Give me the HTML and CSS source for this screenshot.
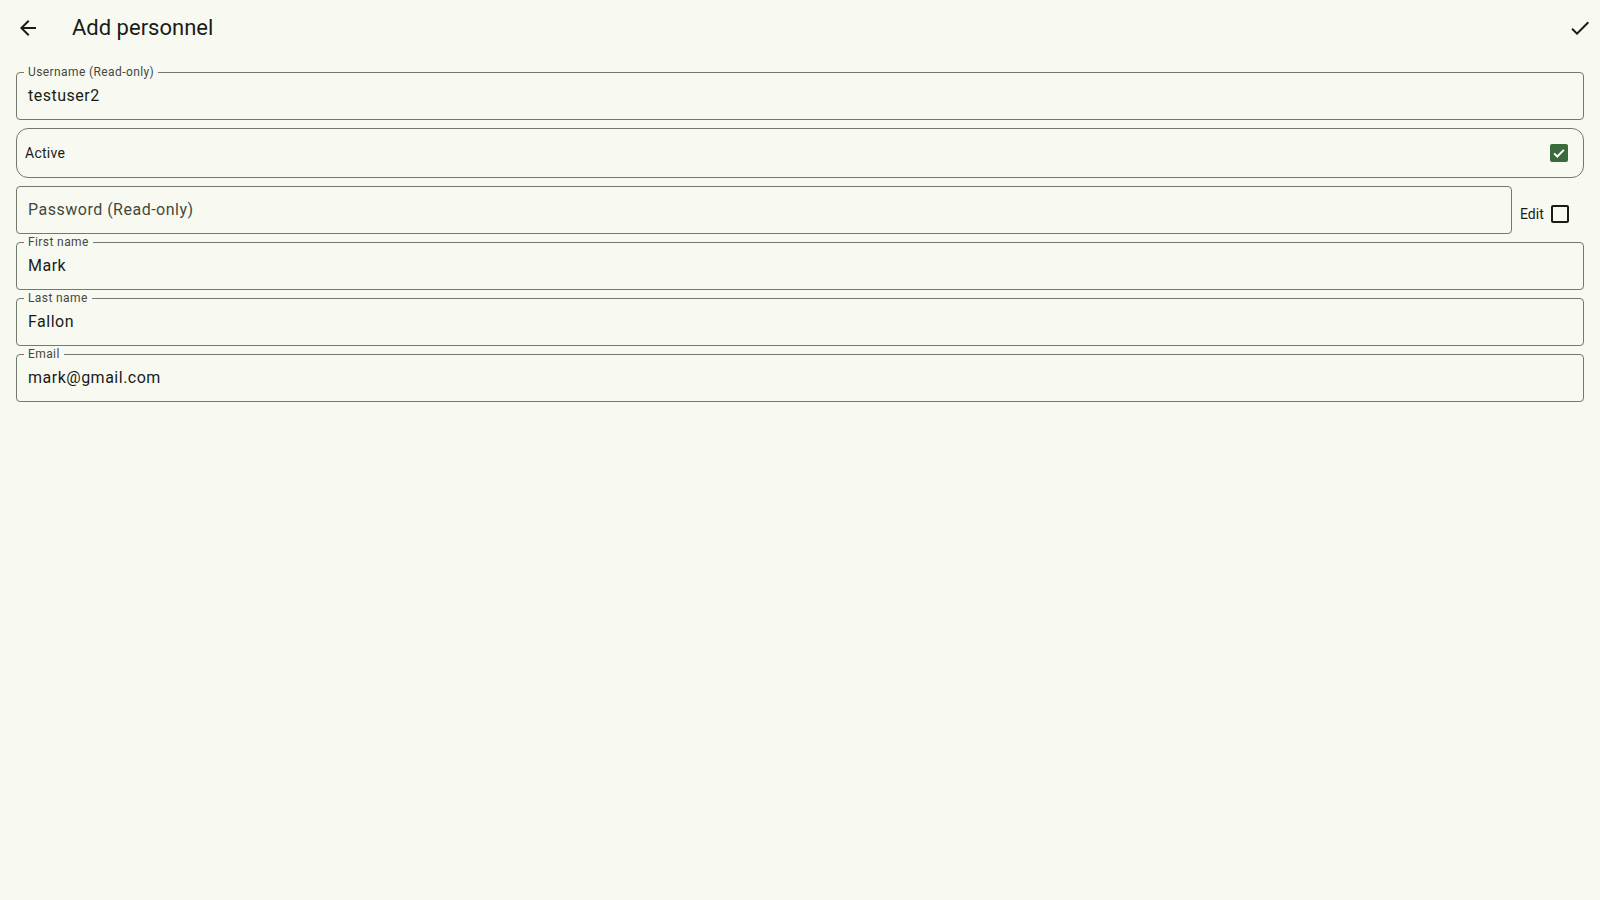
FILE: index.html
```html
<!DOCTYPE html>
<html lang="en">
<head>
<meta charset="utf-8">
<title>Add personnel</title>
<link rel="stylesheet" href="styles.css">
</head>
<body>
<header class="toolbar">
  <svg class="icon" viewBox="0 0 24 24" width="24" height="24"><path d="M20 11H7.83l5.59-5.59L12 4l-8 8 8 8 1.41-1.41L7.83 13H20v-2z"/></svg>
  <h1 class="title">Add personnel</h1>
  <svg class="icon icon-right" viewBox="0 0 24 24" width="24" height="24"><path d="M9 16.17L4.83 12l-1.42 1.41L9 19 21 7l-1.41-1.41z"/></svg>
</header>
<main class="form">
  <div class="field">
    <span class="label">Username (Read-only)</span>
    <span class="value">testuser2</span>
  </div>
  <div class="switch-row">
    <span class="switch-text">Active</span>
    <span class="checkbox checked">
      <svg viewBox="0 0 24 24" width="18" height="18"><path d="M5.5 12.5l4.2 4.2 8.8-8.8" fill="none" stroke="#fff" stroke-width="2.6"/></svg>
    </span>
  </div>
  <div class="password-row">
    <div class="field field-grow">
      <span class="placeholder">Password (Read-only)</span>
    </div>
    <div class="edit-group">
      <span class="edit-text">Edit</span>
      <span class="checkbox"></span>
    </div>
  </div>
  <div class="field">
    <span class="label">First name</span>
    <span class="value">Mark</span>
  </div>
  <div class="field">
    <span class="label">Last name</span>
    <span class="value">Fallon</span>
  </div>
  <div class="field">
    <span class="label">Email</span>
    <span class="value">mark@gmail.com</span>
  </div>
</main>
</body>
</html>
```
FILE: styles.css
```css
* { box-sizing: border-box; }
html, body {
  margin: 0;
  padding: 0;
  background: #f8faf2;
  font-family: Roboto, "Liberation Sans", sans-serif;
  color: #1a1c18;
}
.toolbar {
  height: 56px;
  display: flex;
  align-items: center;
  padding: 0 8px 0 16px;
}
.icon { fill: #1a1c18; flex: none; }
.title {
  margin: 0 0 0 32px;
  font-size: 22px;
  font-weight: 400;
  line-height: 28px;
  flex: 1;
}
.form {
  padding: 16px 16px;
  display: flex;
  flex-direction: column;
  gap: 8px;
}
.field {
  position: relative;
  height: 48px;
  border: 1px solid #74796d;
  border-radius: 4px;
  display: flex;
  align-items: center;
  padding: 0 11px;
}
.label {
  position: absolute;
  top: -9px;
  left: 7px;
  padding: 0 4px;
  font-size: 12px;
  line-height: 16px;
  color: #44483e;
  background: #f8faf2;
  letter-spacing: 0.4px;
}
.value {
  font-size: 16px;
  line-height: 24px;
  letter-spacing: 0.5px;
  color: #1a1c18;
}
.placeholder {
  font-size: 16px;
  line-height: 24px;
  letter-spacing: 0.5px;
  color: #44483e;
}
.switch-row {
  height: 50px;
  border: 1px solid #74796d;
  border-radius: 12px;
  display: flex;
  align-items: center;
  justify-content: space-between;
  padding: 0 15px 0 8px;
}
.switch-text {
  font-size: 14px;
  letter-spacing: 0.25px;
}
.checkbox {
  width: 18px;
  height: 18px;
  border: 2px solid #1a1c18;
  border-radius: 2px;
  display: inline-flex;
  align-items: center;
  justify-content: center;
  flex: none;
}
.checkbox.checked {
  border: none;
  background: #3b6a3b;
}
.password-row {
  display: flex;
  align-items: center;
}
.field-grow { flex: 1; }
.edit-group {
  display: flex;
  align-items: center;
  gap: 7px;
  padding: 0 15px 0 8px;
  margin-top: 8px;
}
.edit-text {
  font-size: 14px;
  letter-spacing: 0.1px;
}
```
